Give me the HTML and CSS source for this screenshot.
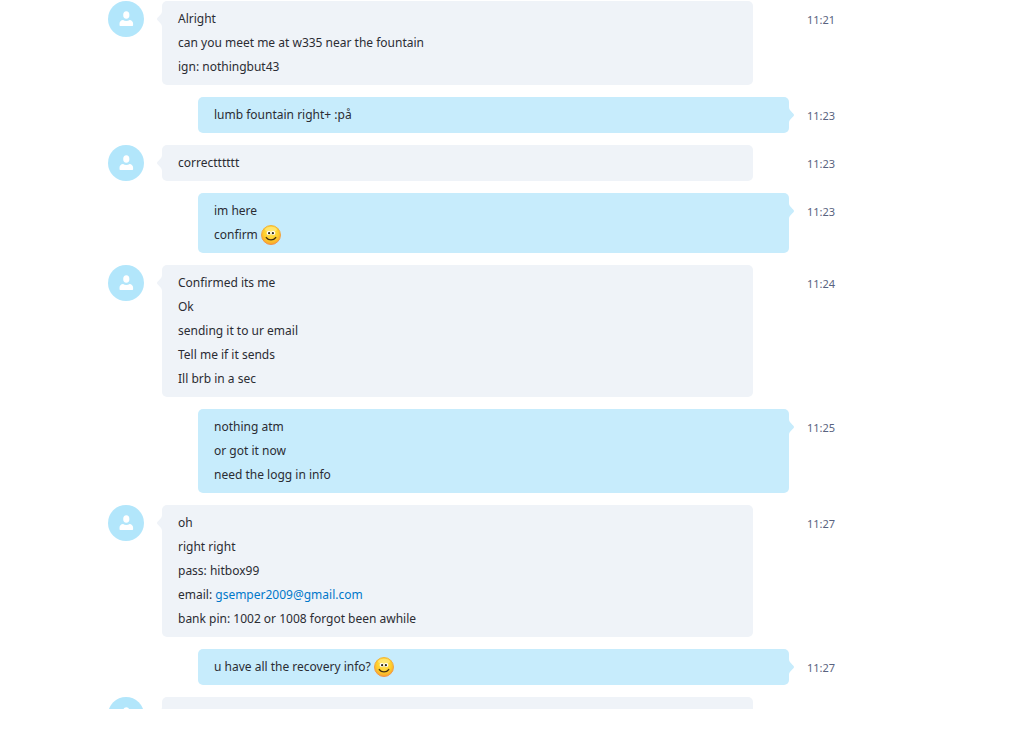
FILE: index.html
```
<!DOCTYPE html>
<html lang="en">
<head>
    <meta charset="UTF-8">
    <meta name="viewport" content="width=device-width, initial-scale=1.0">
    <title>Chat</title>
    <link rel="stylesheet" href="styles.css">
</head>
<body>
    <!-- shared icons -->
    <svg class="sprite" aria-hidden="true">
        <defs>
            <radialGradient id="face" cx="50%" cy="38%" r="62%">
                <stop offset="0" stop-color="#ffe45a"/>
                <stop offset="0.6" stop-color="#ffd02c"/>
                <stop offset="1" stop-color="#f8a52a"/>
            </radialGradient>
            <linearGradient id="rim" x1="0" y1="0" x2="0" y2="1">
                <stop offset="0" stop-color="#f0b63c"/>
                <stop offset="1" stop-color="#f2904a"/>
            </linearGradient>
        </defs>
        <symbol id="person" viewBox="0 0 36 36">
            <ellipse cx="18.300" cy="14" rx="3.100" ry="3.800"/>
            <path d="M12.300 25c-.5 0-.8-.3-.8-.8v-1.400c0-2.200 1.400-3.600 3.600-3.800.8.700 1.900 1.100 3.200 1.100s2.400-.4 3.200-1.100c2.200.2 3.600 1.600 3.600 3.800v1.400c0 .5-.3.800-.8.800z"/>
        </symbol>
        <symbol id="smile" viewBox="0 0 20 20">
            <circle cx="10" cy="10" r="9.500" fill="url(#face)" stroke="url(#rim)"/>
            <ellipse cx="10" cy="4.500" rx="6" ry="2.800" fill="#fff3a0" opacity="0.5"/>
            <ellipse cx="7.800" cy="8" rx="2.200" ry="2" fill="#fff"/>
            <ellipse cx="12.200" cy="8" rx="2.200" ry="2" fill="#fff"/>
            <circle cx="8.100" cy="8.200" r="1.100" fill="#2f2616"/>
            <circle cx="11.900" cy="8.200" r="1.100" fill="#2f2616"/>
            <path d="M5.300 12.600c2.200 3 7.200 3 9.400 0" fill="none" stroke="#46300f" stroke-width="1.400" stroke-linecap="round"/>
        </symbol>
    </svg>

    <main class="chat">
        <div class="message received">
            <svg class="avatar" role="img" aria-label="Contact"><use href="#person"/></svg>
            <div class="bubble">
                <p>Alright</p>
                <p>can you meet me at w335 near the fountain</p>
                <p>ign: nothingbut43</p>
            </div>
            <time>11:21</time>
        </div>

        <div class="message sent">
            <div class="bubble">
                <p>lumb fountain right+ :på</p>
            </div>
            <time>11:23</time>
        </div>

        <div class="message received">
            <svg class="avatar" role="img" aria-label="Contact"><use href="#person"/></svg>
            <div class="bubble">
                <p>correctttttt</p>
            </div>
            <time>11:23</time>
        </div>

        <div class="message sent">
            <div class="bubble">
                <p>im here</p>
                <p>confirm <svg class="emoji" role="img" aria-label="smile"><use href="#smile"/></svg></p>
            </div>
            <time>11:23</time>
        </div>

        <div class="message received">
            <svg class="avatar" role="img" aria-label="Contact"><use href="#person"/></svg>
            <div class="bubble">
                <p>Confirmed its me</p>
                <p>Ok</p>
                <p>sending it to ur email</p>
                <p>Tell me if it sends</p>
                <p>Ill brb in a sec</p>
            </div>
            <time>11:24</time>
        </div>

        <div class="message sent">
            <div class="bubble">
                <p>nothing atm</p>
                <p>or got it now</p>
                <p>need the logg in info</p>
            </div>
            <time>11:25</time>
        </div>

        <div class="message received">
            <svg class="avatar" role="img" aria-label="Contact"><use href="#person"/></svg>
            <div class="bubble">
                <p>oh</p>
                <p>right right</p>
                <p>pass: hitbox99</p>
                <p>email: <a href="mailto:gsemper2009@gmail.com">gsemper2009@gmail.com</a></p>
                <p>bank pin: 1002 or 1008 forgot been awhile</p>
            </div>
            <time>11:27</time>
        </div>

        <div class="message sent">
            <div class="bubble">
                <p>u have all the recovery info? <svg class="emoji" role="img" aria-label="smile"><use href="#smile"/></svg></p>
            </div>
            <time>11:27</time>
        </div>

        <div class="message received">
            <svg class="avatar" role="img" aria-label="Contact"><use href="#person"/></svg>
            <div class="bubble"></div>
        </div>
    </main>
</body>
</html>
```
FILE: styles.css
```
* {
    box-sizing: border-box;
}

body {
    display: flex;
    flex-direction: column;
    height: 100vh;
    margin: 0;
    padding-bottom: 25px;
    background: #fff;
    color: #2b2c33;
    font-family: "Noto Sans", "Segoe UI", sans-serif;
    font-size: 12px;
    line-height: 24px;
}

.sprite {
    position: absolute;
    width: 0;
    height: 0;
}

.chat {
    flex: 1;
    min-height: 0;
    display: flex;
    flex-direction: column;
    gap: 12px;
    padding: 1px 188px 0 108px;
    overflow: hidden;
}

.message {
    flex-shrink: 0;
    display: grid;
    grid-template-columns: 36px 1fr 27px;
    column-gap: 18px;
    align-items: start;
}

.avatar {
    width: 36px;
    height: 36px;
    border-radius: 50%;
    background: #b2e6fb;
    fill: #fff;
}

.bubble {
    position: relative;
    grid-column: 2;
    min-height: 36px;
    padding: 6px 16px;
    border-radius: 5px;
}

.bubble p {
    margin: 0;
    height: 24px;
}

/* little pointer on the side of the bubble */
.bubble::before {
    content: "";
    position: absolute;
    top: 10px;
    width: 5px;
    height: 16px;
    background: inherit;
}

.received .bubble {
    margin-right: 36px;
    background: #eff3f8;
}

.received .bubble::before {
    right: 100%;
    clip-path: path("M5 0C5 4 0 6 0 8C0 10 5 12 5 16Z");
}

.sent .bubble {
    margin-left: 36px;
    background: #c7ecfc;
}

.sent .bubble::before {
    left: 100%;
    clip-path: path("M0 0C0 4 5 6 5 8C5 10 0 12 0 16Z");
}

.bubble a {
    color: #0078ca;
    text-decoration: none;
}

.emoji {
    width: 20px;
    height: 20px;
    margin-top: 2px;
    vertical-align: top;
}

time {
    grid-column: 3;
    padding-top: 7px;
    color: #596380;
    font-size: 11px;
    white-space: nowrap;
}
```
